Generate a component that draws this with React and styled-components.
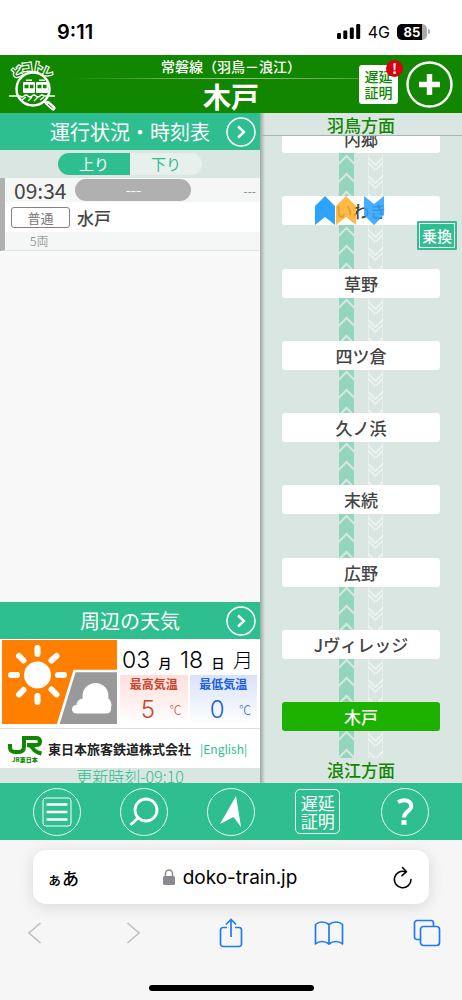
import React, { useState } from 'react';
import styled, { createGlobalStyle } from 'styled-components';

const jp = "'Noto Sans CJK JP', sans-serif";

const GlobalStyle = createGlobalStyle`
  * {
    box-sizing: border-box;
  }
  body {
    margin: 0;
    background: #fff;
    font-family: ${jp};
    color: #444;
  }
  button {
    font-family: inherit;
    padding: 0;
    border: 0;
    background: none;
    color: inherit;
    cursor: pointer;
  }
  a {
    text-decoration: none;
  }
  svg {
    display: block;
  }
`;

const Page = styled.div`
  display: flex;
  flex-direction: column;
  min-height: 100vh;
`;

const StatusBar = styled.div`
  display: flex;
  justify-content: space-between;
  align-items: center;
  height: 55px;
  padding: 8px 32px 0 57px;
  font-family: Inter, sans-serif;
  color: #000;
`;

const Clock = styled.span`
  font-size: 20px;
  font-weight: 600;
`;

const StatusIcons = styled.div`
  display: flex;
  align-items: center;
  gap: 7px;
  font-size: 16px;
`;

const Battery = styled.span`
  display: flex;
  align-items: center;
  gap: 1px;
`;

const BatteryBody = styled.span`
  width: 30px;
  height: 16px;
  border-radius: 5px;
  background: linear-gradient(90deg, #000 84%, #aaa 84%);
  color: #fff;
  font-size: 13px;
  font-weight: 700;
  line-height: 16px;
  text-align: center;
`;

const BatteryTip = styled.span`
  width: 2px;
  height: 5px;
  border-radius: 0 2px 2px 0;
  background: #aaa;
`;

const Header = styled.header`
  display: grid;
  grid-template-columns: 104px 1fr 104px;
  align-items: center;
  height: 58px;
  background: #118700;
  color: #fff;
`;

const LogoLink = styled.a`
  padding-left: 8px;
`;

const HeaderTitles = styled.div`
  text-align: center;
`;

const LineName = styled.p`
  margin: 0;
  font-size: 14px;
  font-weight: 500;
  line-height: 23px;
  white-space: nowrap;
`;

const HeaderRule = styled.div`
  height: 1px;
  margin-left: -32px;
  background: linear-gradient(90deg, transparent, #8cc583 50%, #8cc583 60%, #4ea443);
`;

const StationTitle = styled.h1`
  margin: 0;
  font-size: 28px;
  font-weight: 700;
  line-height: 34px;
`;

const HeaderButtons = styled.div`
  display: flex;
  justify-content: flex-end;
  align-items: center;
  gap: 8px;
  padding-right: 9px;
`;

const DelayButton = styled.button`
  position: relative;
  width: 39px;
  height: 39px;
  border-radius: 3px;
  background: #fff;
  color: #118700;
  font-size: 14px;
  font-weight: 500;
  line-height: 16px;
`;

const AlertBadge = styled.span`
  position: absolute;
  top: -5px;
  right: -5px;
  width: 17px;
  height: 17px;
  border-radius: 50%;
  background: #d80010;
  color: #fff;
  font-size: 14px;
  font-weight: 700;
  line-height: 16px;
`;

const Body = styled.main`
  flex: 1;
  display: grid;
  grid-template-columns: 260fr 202fr;
`;

const InfoPanel = styled.section`
  display: flex;
  flex-direction: column;
  background: #f8f8f8;
`;

const SectionBar = styled.button`
  display: grid;
  grid-template-columns: 1fr 34px;
  align-items: center;
  height: 37px;
  padding-left: 34px;
  background: #2fbe8f;
  color: #fff;
  font-size: 20px;
  line-height: 37px;
`;

const Direction = styled.div`
  display: flex;
  justify-content: center;
  align-items: center;
  height: 28px;
  background: #d9e6e2;
`;

const DirectionTab = styled.button`
  width: 72px;
  height: 22px;
  font-size: 15px;
  line-height: 22px;
  background: ${(props) => (props.$active ? '#2fbe8f' : '#e8f0ee')};
  color: ${(props) => (props.$active ? '#fff' : '#2fbe8f')};
  &:first-child {
    border-radius: 11px 0 0 11px;
  }
  &:last-child {
    border-radius: 0 11px 11px 0;
  }
`;

const Train = styled.article`
  border-left: 5px solid #b0b0b0;
  border-bottom: 1px solid #dbe7e3;
  background: #fff;
`;

const TrainTime = styled.div`
  display: flex;
  align-items: center;
  height: 24px;
  padding: 0 4px 0 9px;
  background: #f5f7f7;
  font-size: 21px;
`;

const TrainDelay = styled.span`
  width: 116px;
  height: 22px;
  margin: 0 auto 0 9px;
  border-radius: 11px;
  background: #b0b0b0;
  color: #fff;
  font-size: 15px;
  line-height: 22px;
  text-align: center;
`;

const TrainNote = styled.span`
  color: #888;
  font-size: 12px;
`;

const TrainRoute = styled.div`
  display: flex;
  align-items: center;
  gap: 7px;
  height: 30px;
  padding-left: 6px;
  font-size: 17px;
  font-weight: 500;
`;

const TrainType = styled.span`
  width: 59px;
  height: 21px;
  border: 1px solid #857f80;
  border-radius: 3px;
  color: #777;
  font-size: 13px;
  font-weight: 400;
  line-height: 19px;
  text-align: center;
`;

const TrainCars = styled.div`
  height: 18px;
  padding-left: 25px;
  background: #f5f7f7;
  color: #777;
  font-size: 12px;
  font-weight: 300;
  line-height: 18px;
`;

const WeatherBar = styled(SectionBar)`
  margin-top: auto;
`;

const Weather = styled.div`
  display: grid;
  grid-template-columns: 115px 1fr;
  gap: 3px;
  height: 90px;
  padding: 1px 3px 4px 2px;
  border-bottom: 1px solid #ddd;
  background: #fff;
`;

const WeatherDate = styled.p`
  display: flex;
  justify-content: space-between;
  align-items: baseline;
  height: 35px;
  margin: 0;
  padding: 0 4px 0 2px;
  color: #000;
  font-family: Inter, ${jp};
  font-size: 23px;
  font-weight: 300;
  line-height: 40px;
`;

const DateUnit = styled.small`
  font-size: 13px;
  font-weight: 500;
`;

const Weekday = styled.span`
  font-size: 20px;
`;

const Temperatures = styled.div`
  display: grid;
  grid-template-columns: 1fr 1fr;
  gap: 2px;
`;

const Temperature = styled.div`
  height: 49px;
  background: linear-gradient(${(props) => props.$tint}, #fff);
  color: ${(props) => props.$color};
  text-align: center;
`;

const TemperatureLabel = styled.div`
  font-size: 12px;
  font-weight: 700;
  line-height: 18px;
`;

const TemperatureValue = styled.div`
  display: grid;
  grid-template-columns: 1fr 24px;
  align-items: center;
  padding-left: 12px;
  font-family: Inter, ${jp};
  font-size: 24px;
  font-weight: 300;
  line-height: 34px;
  small {
    font-family: ${jp};
    font-size: 12px;
  }
`;

const Company = styled.div`
  display: flex;
  align-items: center;
  height: 39px;
  padding-left: 7px;
  background: #fff;
  color: #222;
  font-size: 13px;
  font-weight: 700;
`;

const CompanyName = styled.span`
  margin: 0 9px 0 5px;
  white-space: nowrap;
`;

const EnglishLink = styled.a`
  color: #2fbe8f;
  font-size: 12px;
  font-weight: 400;
`;

const Updated = styled.div`
  height: 15px;
  background: #d9e6e2;
  color: #2fbe8f;
  font-size: 16px;
  font-weight: 300;
  line-height: 16px;
  text-align: center;
`;

const LinePanel = styled.section`
  display: flex;
  flex-direction: column;
  background: linear-gradient(90deg, #9aa6a2, #d9e6e2 5px);
`;

const Bound = styled.div`
  height: ${(props) => (props.$top ? '23px' : '25px')};
  border-bottom: ${(props) => (props.$top ? '1px solid #a9b3b0' : '0')};
  color: #118700;
  font-size: 17px;
  font-weight: 500;
  line-height: 24px;
  text-align: center;
`;

const LineView = styled.div`
  position: relative;
  display: flex;
  flex: 1;
  overflow: hidden;
`;

const Tracks = styled.svg`
  position: absolute;
  top: 0;
  left: 50%;
  width: 44px;
  height: 100%;
  margin-left: -22px;
`;

const Stations = styled.ul`
  position: relative;
  display: flex;
  flex: 1;
  flex-direction: column;
  justify-content: space-between;
  margin: -12px 0 27px;
  padding: 0 22px;
  list-style: none;
`;

const Station = styled.li`
  position: relative;
`;

const StationButton = styled.button`
  display: block;
  width: 100%;
  height: 29px;
  border-radius: 3px;
  background: ${(props) => (props.$current ? '#1db100' : '#fff')};
  color: ${(props) => (props.$current ? '#fff' : '#444')};
  font-size: 17px;
  font-weight: 500;
  line-height: 29px;
`;

const Trains = styled.svg`
  position: absolute;
  top: 0;
  left: 50%;
  width: 70px;
  height: 29px;
  margin-left: -46px;
  pointer-events: none;
`;

const TransferButton = styled.button`
  position: absolute;
  top: 25px;
  right: -17px;
  width: 40px;
  height: 29px;
  border: 1px solid #2fbe8f;
  border-radius: 1px;
  outline: 1px solid #fff;
  outline-offset: -3px;
  background: #2fbe8f;
  color: #fff;
  font-size: 15px;
  font-weight: 500;
  line-height: 27px;
`;

const Toolbar = styled.nav`
  display: grid;
  grid-template-columns: repeat(5, 1fr);
  place-items: center;
  height: 57px;
  padding: 0 14px;
  background: #2fbe8f;
`;

const ToolButton = styled.button`
  display: grid;
  place-items: center;
  width: 48px;
  height: 48px;
  border: 1px solid #e6fff7;
  border-radius: 50%;
  color: #fff;
`;

const CertificateButton = styled.button`
  width: 45px;
  height: 45px;
  border: 1px solid #e6fff7;
  border-radius: 5px;
  color: #fff;
  font-size: 17px;
  line-height: 18px;
`;

const Browser = styled.footer`
  display: flex;
  flex-direction: column;
  align-items: center;
  height: 160px;
  padding: 10px 20px 9px;
  background: #f6f6f6;
`;

const AddressBar = styled.div`
  display: grid;
  grid-template-columns: 40px 1fr 40px;
  align-items: center;
  width: calc(100% - 26px);
  height: 54px;
  padding: 0 16px 0 14px;
  border-radius: 13px;
  background: #fff;
  box-shadow: 0 3px 16px rgba(0, 0, 0, 0.12);
  color: #000;
`;

const ReaderButton = styled.button`
  font-size: 17px;
  font-weight: 500;
  text-align: left;
  white-space: nowrap;
  small {
    font-size: 15px;
  }
`;

const Address = styled.button`
  display: flex;
  justify-content: center;
  align-items: center;
  gap: 8px;
  font-family: Inter, sans-serif;
  font-size: 19px;
`;

const ReloadButton = styled.button`
  justify-self: end;
`;

const BrowserButtons = styled.div`
  display: flex;
  justify-content: space-between;
  align-items: center;
  width: 100%;
  height: 58px;
`;

const BrowserButton = styled.button`
  display: grid;
  place-items: center;
  width: 30px;
  height: 30px;
  color: ${(props) => (props.disabled ? '#bfbfbf' : '#1f7cf0')};
`;

const HomeIndicator = styled.div`
  width: 165px;
  height: 6px;
  margin-top: auto;
  border-radius: 3px;
  background: #000;
`;

const stations = [
  { name: '内郷' },
  { name: 'いわき', trains: true, transfer: true },
  { name: '草野' },
  { name: '四ツ倉' },
  { name: '久ノ浜' },
  { name: '末続' },
  { name: '広野' },
  { name: 'Jヴィレッジ' },
  { name: '木戸' },
];

function Signal() {
  return (
    <svg width='24' height='15' viewBox='0 0 24 15'>
      <rect x='0' y='9' width='4' height='6' rx='1.2' />
      <rect x='6.3' y='6.5' width='4' height='8.5' rx='1.2' />
      <rect x='12.8' y='3.5' width='4' height='11.5' rx='1.2' />
      <rect x='19.2' y='0' width='4' height='15' rx='1.2' />
    </svg>
  );
}

function Logo() {
  return (
    <svg width='50' height='54' viewBox='0 0 50 54' fill='none' stroke='#fff'>
      <circle cx='25' cy='32' r='16.5' fill='#118700' strokeWidth='2.4' />
      <path
        d='M1 39h11q2 2 4 0t4 0 4 0 4 0 4 0 4 0h11'
        strokeWidth='1.5'
      />
      <path d='M14 43l4-3M20 44l4-4M26 44l4-4M32 43l4-3' strokeWidth='1.4' />
      <g fill='#fff' stroke='none'>
        <rect x='15' y='25' width='12' height='11' rx='1' />
        <rect x='28' y='25' width='12' height='11' rx='1' />
        <rect x='18' y='22.5' width='6' height='1.5' />
        <rect x='31' y='22.5' width='6' height='1.5' />
      </g>
      <path d='M16.5 29.5h4M22 29.5h3.5M29.5 29.5h4M35 29.5h3.5' stroke='#118700' strokeWidth='3.5' />
      <path d='M36.5 44l2.5 2.5' strokeWidth='3' />
      <path d='M40 46.5l5 4.5' strokeWidth='5' strokeLinecap='round' />
      <path d='M40 47l4.5 4' stroke='#118700' strokeWidth='1' />
      <g
        fill='#118700'
        strokeWidth='2.4'
        paintOrder='stroke'
        fontFamily='Noto Sans CJK JP'
        fontSize='11'
        fontWeight='700'
        textAnchor='middle'
      >
        <text x='9' y='19' transform='rotate(-24 9 15)'>ど</text>
        <text x='19' y='14' transform='rotate(-8 19 10)'>コ</text>
        <text x='30' y='14' transform='rotate(10 30 10)'>ト</text>
        <text x='40' y='19' transform='rotate(24 40 15)'>レ</text>
      </g>
    </svg>
  );
}

function PlusIcon() {
  return (
    <svg width='47' height='47' viewBox='0 0 47 47' fill='none' stroke='#fff'>
      <circle cx='23.5' cy='23.5' r='22' strokeWidth='2.4' />
      <path d='M23.5 13v21M13 23.5h21' strokeWidth='5.4' />
    </svg>
  );
}

function CircleArrow() {
  return (
    <svg width='30' height='30' viewBox='0 0 30 30' fill='none' stroke='#fff'>
      <circle cx='15' cy='15' r='14' strokeWidth='1.5' />
      <path d='M12 9.5l6 5.5-6 5.5' strokeWidth='2.4' />
    </svg>
  );
}

function WeatherPicture() {
  return (
    <svg width='115' height='84' viewBox='0 0 115 84'>
      <path d='M0 0h115v84H0z' fill='#ff8000' />
      <path d='M72 31h43v53H56z' fill='#999' />
      <path d='M56 85L72.5 31H115' fill='none' stroke='#fff' strokeWidth='2.6' />
      <circle cx='35.5' cy='35' r='13.5' fill='#fff' />
      <path
        d='M35.5 8v6M35.5 56v6M9 35h6M56 35h6M17 16l4.5 4.5M49.5 49.500l5 5M17 54.5l4.5-4.5M49.5 20.5l5-4.5'
        stroke='#fff'
        strokeWidth='6'
        strokeLinecap='round'
      />
      <g fill='#fff'>
        <circle cx='93.5' cy='56' r='13' />
        <circle cx='101.500' cy='65' r='8' />
        <circle cx='81' cy='65' r='6.500' />
        <rect x='70' y='65' width='39' height='8.500' rx='4.250' />
      </g>
    </svg>
  );
}

function JrLogo() {
  return (
    <svg width='36' height='32' viewBox='0 0 36 32' fill='none'>
      <path
        d='M3 11v3.500q0 4.500 5 4.500h3.500q5.500 0 5.500-5.500V5H29q4 0 4 3.500T29 12H20q4 0 6 3.500t8.500 5'
        stroke='#118700'
        strokeWidth='4'
      />
      <text x='5' y='29' fill='#118700' fontFamily='Noto Sans CJK JP' fontSize='6' fontWeight='900'>
        JR東日本
      </text>
    </svg>
  );
}

function LineTracks() {
  return (
    <Tracks>
      <defs>
        <pattern id='up' width='15' height='18' patternUnits='userSpaceOnUse'>
          <path d='M0 0h15v18H0z' fill='#93d6bd' />
          <path d='M-1 10.500L7.500 2 16 10.500' fill='none' stroke='#d9e6e2' strokeWidth='2' />
        </pattern>
        <pattern id='down' x='29' width='15' height='18' patternUnits='userSpaceOnUse'>
          <path d='M.5 0v18M14.5 0v18' stroke='#e6efec' />
          <path d='M0 3.500L7.500 11 15 3.500M0 8.500L7.500 16 15 8.500' fill='none' stroke='#eef4f2' strokeWidth='1.4' />
        </pattern>
      </defs>
      <rect width='15' height='100%' fill='url(#up)' />
      <rect x='29' width='15' height='100%' fill='url(#down)' />
    </Tracks>
  );
}

function TrainMarks() {
  return (
    <Trains>
      <path d='M0 10L10 0l10 10v19l-10-8-10 8z' fill='#2ea3ff' />
      <path d='M21 10L31 0l10 10v19l-10-8-10 8z' fill='#ffae27' fillOpacity='.85' />
      <path d='M49 0l10 8 10-8v19L59 29 49 19z' fill='#2ea3ff' fillOpacity='.88' />
    </Trains>
  );
}

function App() {
  const [direction, setDirection] = useState('上り');
  const [current, setCurrent] = useState('木戸');

  return (
    <Page>
      <GlobalStyle />
      <StatusBar>
        <Clock>9:11</Clock>
        <StatusIcons>
          <Signal />
          <span>4G</span>
          <Battery>
            <BatteryBody>85</BatteryBody>
            <BatteryTip />
          </Battery>
        </StatusIcons>
      </StatusBar>

      <Header>
        <LogoLink href='#' aria-label='どこトレ'>
          <Logo />
        </LogoLink>
        <HeaderTitles>
          <LineName>常磐線（羽鳥－浪江）</LineName>
          <HeaderRule />
          <StationTitle>{current}</StationTitle>
        </HeaderTitles>
        <HeaderButtons>
          <DelayButton>
            遅延
            <br />
            証明
            <AlertBadge>!</AlertBadge>
          </DelayButton>
          <button aria-label='追加'>
            <PlusIcon />
          </button>
        </HeaderButtons>
      </Header>

      <Body>
        <InfoPanel>
          <SectionBar>
            運行状況・時刻表
            <CircleArrow />
          </SectionBar>
          <Direction>
            {['上り', '下り'].map((name) => (
              <DirectionTab
                key={name}
                $active={direction === name}
                onClick={() => setDirection(name)}
              >
                {name}
              </DirectionTab>
            ))}
          </Direction>
          <Train>
            <TrainTime>
              <span>09:34</span>
              <TrainDelay>---</TrainDelay>
              <TrainNote>---</TrainNote>
            </TrainTime>
            <TrainRoute>
              <TrainType>普通</TrainType>
              水戸
            </TrainRoute>
            <TrainCars>5両</TrainCars>
          </Train>

          <WeatherBar>
            周辺の天気
            <CircleArrow />
          </WeatherBar>
          <Weather>
            <WeatherPicture />
            <div>
              <WeatherDate>
                <span>03</span>
                <DateUnit>月</DateUnit>
                <span>18</span>
                <DateUnit>日</DateUnit>
                <Weekday>月</Weekday>
              </WeatherDate>
              <Temperatures>
                <Temperature $color='#c8452a' $tint='#ffdfdc'>
                  <TemperatureLabel>最高気温</TemperatureLabel>
                  <TemperatureValue>
                    5<small>℃</small>
                  </TemperatureValue>
                </Temperature>
                <Temperature $color='#2060e0' $tint='#d9e2fa'>
                  <TemperatureLabel>最低気温</TemperatureLabel>
                  <TemperatureValue>
                    0<small>℃</small>
                  </TemperatureValue>
                </Temperature>
              </Temperatures>
            </div>
          </Weather>
          <Company>
            <JrLogo />
            <CompanyName>東日本旅客鉄道株式会社</CompanyName>
            <EnglishLink href='#'>|English|</EnglishLink>
          </Company>
          <Updated>更新時刻-09:10</Updated>
        </InfoPanel>

        <LinePanel>
          <Bound $top>羽鳥方面</Bound>
          <LineView>
            <LineTracks />
            <Stations>
              {stations.map((station) => (
                <Station key={station.name}>
                  <StationButton
                    $current={station.name === current}
                    onClick={() => setCurrent(station.name)}
                  >
                    {station.name}
                  </StationButton>
                  {station.trains && <TrainMarks />}
                  {station.transfer && <TransferButton>乗換</TransferButton>}
                </Station>
              ))}
            </Stations>
          </LineView>
          <Bound>浪江方面</Bound>
        </LinePanel>
      </Body>

      <Toolbar>
        <ToolButton aria-label='メニュー'>
          <svg width='30' height='30' viewBox='0 0 30 30' fill='none' stroke='#fff'>
            <rect x='1' y='1' width='28' height='28' rx='3' />
            <path d='M4.5 7.500h21M4.5 15h21M4.5 22.500h21' strokeWidth='2.6' />
          </svg>
        </ToolButton>
        <ToolButton aria-label='検索'>
          <svg width='30' height='30' viewBox='0 0 30 30' fill='none' stroke='#fff'>
            <circle cx='17' cy='13' r='11' strokeWidth='2.8' />
            <path d='M9.5 20.5l-8 7.500' strokeWidth='2.8' />
          </svg>
        </ToolButton>
        <ToolButton aria-label='現在地'>
          <svg width='22' height='32' viewBox='0 0 22 32' fill='#fff'>
            <path d='M16 0l5 31-7.500-10L0 28z' />
          </svg>
        </ToolButton>
        <CertificateButton>
          遅延
          <br />
          証明
        </CertificateButton>
        <ToolButton aria-label='ヘルプ'>
          <svg width='18' height='28' viewBox='0 0 18 28' fill='none' stroke='#fff'>
            <path d='M2 4q6-3 10-1t3 6.500c-1 4-7 4.500-7 10' strokeWidth='4' />
            <path d='M8 22v5' strokeWidth='5' />
          </svg>
        </ToolButton>
      </Toolbar>

      <Browser>
        <AddressBar>
          <ReaderButton>
            <small>ぁ</small>あ
          </ReaderButton>
          <Address>
            <svg width='12' height='16' viewBox='0 0 12 16' fill='#8a8a8e'>
              <rect x='0' y='7' width='12' height='9' rx='1.5' />
              <path d='M2.5 7.500V4.500a3.500 3.500 0 0 1 7 0v3' fill='none' stroke='#8a8a8e' strokeWidth='1.5' />
            </svg>
            doko-train.jp
          </Address>
          <ReloadButton aria-label='再読み込み'>
            <svg width='20' height='23' viewBox='0 0 20 23' fill='none' stroke='#000' strokeWidth='1.6' strokeLinecap='round' strokeLinejoin='round'>
              <path d='M18 13.500A8.300 8.300 0 1 1 12.500 5.700' />
              <path d='M9.500 1.500l4 4.200-4.500 4' />
            </svg>
          </ReloadButton>
        </AddressBar>
        <BrowserButtons>
          <BrowserButton disabled aria-label='戻る'>
            <svg width='20' height='24' viewBox='0 0 20 24' fill='none' stroke='currentColor' strokeWidth='1.6'>
              <path d='M15.500 2L4 12l11.500 10' />
            </svg>
          </BrowserButton>
          <BrowserButton disabled aria-label='進む'>
            <svg width='20' height='24' viewBox='0 0 20 24' fill='none' stroke='currentColor' strokeWidth='1.6'>
              <path d='M4.500 2L16 12 4.500 22' />
            </svg>
          </BrowserButton>
          <BrowserButton aria-label='共有'>
            <svg width='24' height='30' viewBox='0 0 24 30' fill='none' stroke='currentColor' strokeWidth='1.7'>
              <path d='M8 9.500H4a2.500 2.500 0 0 0-2.500 2.500v14A2.500 2.500 0 0 0 4 28.500h16a2.500 2.500 0 0 0 2.500-2.500V12A2.500 2.500 0 0 0 20 9.500h-4M12 19V2M7 6.500l5-5 5 5' />
            </svg>
          </BrowserButton>
          <BrowserButton aria-label='ブックマーク'>
            <svg width='30' height='26' viewBox='0 0 30 26' fill='none' stroke='currentColor' strokeWidth='1.7' strokeLinejoin='round'>
              <path d='M15 4.500Q12 2 8 2T1.500 4.500V24Q4 21.500 8 21.500t7 2.500q3-2.500 7-2.500t6.500 2.500V4.500Q26 2 22 2t-7 2.500zM15 4.500V24' />
            </svg>
          </BrowserButton>
          <BrowserButton aria-label='タブ'>
            <svg width='28' height='28' viewBox='0 0 28 28' fill='none' stroke='currentColor' strokeWidth='1.7'>
              <rect x='7.500' y='7.500' width='19' height='19' rx='3' />
              <path d='M7 20.500H4A2.500 2.500 0 0 1 1.500 18V4A2.500 2.500 0 0 1 4 1.500h14A2.500 2.500 0 0 1 20.500 4v3' />
            </svg>
          </BrowserButton>
        </BrowserButtons>
        <HomeIndicator />
      </Browser>
    </Page>
  );
}

export default App;
